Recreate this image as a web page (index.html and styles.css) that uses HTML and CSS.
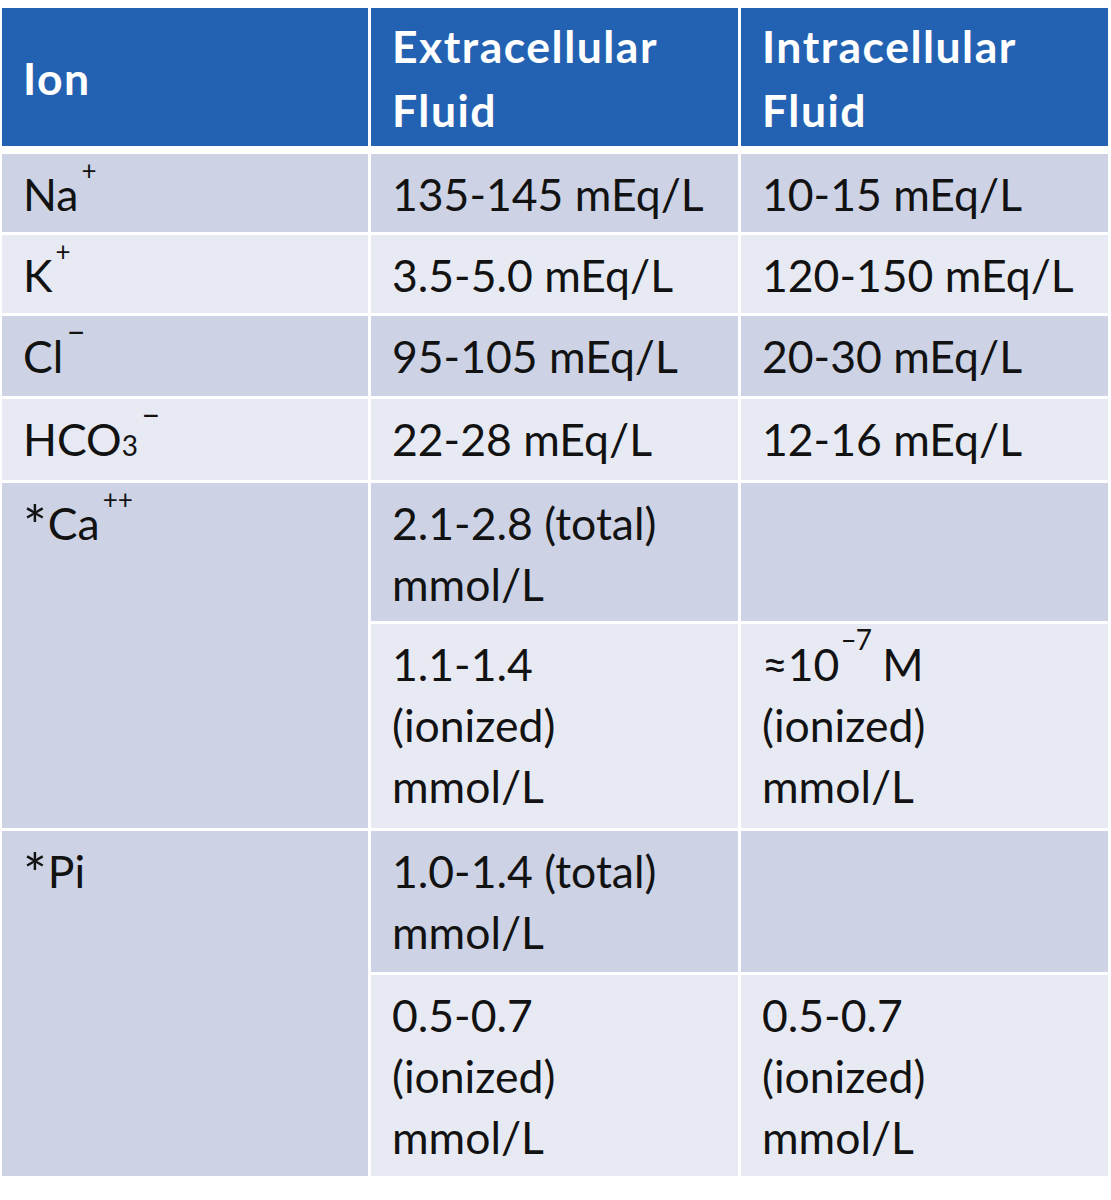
FILE: index.html
```html
<!DOCTYPE html>
<html>
<head>
<meta charset="utf-8">
<link rel="stylesheet" href="styles.css">
</head>
<body>
<div class="table">
  <div class="cell head">Ion</div>
  <div class="cell head">Extracellular<br>Fluid</div>
  <div class="cell head">Intracellular<br>Fluid</div>

  <div class="cell dark ion">Na<span class="sup">+</span></div>
  <div class="cell dark">135-145 mEq/L</div>
  <div class="cell dark">10-15 mEq/L</div>

  <div class="cell light ion">K<span class="sup">+</span></div>
  <div class="cell light">3.5-5.0 mEq/L</div>
  <div class="cell light">120-150 mEq/L</div>

  <div class="cell dark ion">Cl<span class="sup dash">&#8211;</span></div>
  <div class="cell dark">95-105 mEq/L</div>
  <div class="cell dark">20-30 mEq/L</div>

  <div class="cell light ion">HCO<span class="small">3</span><span class="sup dash">&#8211;</span></div>
  <div class="cell light">22-28 mEq/L</div>
  <div class="cell light">12-16 mEq/L</div>

  <div class="cell dark ion span2"><span class="ast">*</span>Ca<span class="sup">++</span></div>
  <div class="cell dark">2.1-2.8 (total)<br>mmol/L</div>
  <div class="cell dark"></div>
  <div class="cell light">1.1-1.4<br>(ionized)<br>mmol/L</div>
  <div class="cell light">&#8776;10<span class="sup exp">&#8211;7</span> M<br>(ionized)<br>mmol/L</div>

  <div class="cell dark ion span2"><span class="ast">*</span>Pi</div>
  <div class="cell dark">1.0-1.4 (total)<br>mmol/L</div>
  <div class="cell dark"></div>
  <div class="cell light">0.5-0.7<br>(ionized)<br>mmol/L</div>
  <div class="cell light">0.5-0.7<br>(ionized)<br>mmol/L</div>
</div>
</body>
</html>
```

FILE: styles.css
```css
html, body {
  margin: 0;
  padding: 0;
  background: #ffffff;
}

body {
  padding: 8px 0 0 2px;
  font-family: Lato, "Open Sans", sans-serif;
}

.table {
  display: grid;
  grid-template-columns: 366px 367px 367px;
  grid-template-rows: 143px 78px 78px 80px 81px 138px 204px 141px 201px;
  column-gap: 3px;
  row-gap: 3px;
  width: 1106px;
  background: #ffffff;
}

.cell {
  padding: 9px 10px 9px 21px;
  font-size: 44.5px;
  line-height: 61px;
  color: #121212;
  white-space: nowrap;
}

.head {
  background: #2362b2;
  color: #ffffff;
  font-weight: 700;
  letter-spacing: 1.5px;
  line-height: 64px;
  display: flex;
  align-items: center;
  padding-top: 6px;
  padding-bottom: 4px;
  margin-bottom: 5px;
}

.dark {
  background: #cdd3e5;
}

.light {
  background: #e8eaf3;
}

.span2 {
  grid-row: span 2;
}

.sup {
  font-size: 26px;
  line-height: 0;
  vertical-align: 31px;
  margin-left: 3px;
}

.dash {
  font-size: 34px;
  vertical-align: 30px;
}

.exp {
  font-size: 28px;
  letter-spacing: -1px;
  margin-left: 1px;
}

.small {
  font-size: 28px;
}

.ast {
  font-size: 56px;
  line-height: 0;
  vertical-align: -6px;
  margin-right: 1px;
}
```
